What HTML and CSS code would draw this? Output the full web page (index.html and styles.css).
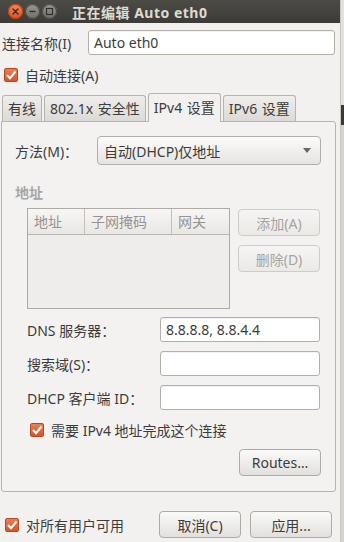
FILE: index.html
```html
<!DOCTYPE html>
<html>
<head>
    <meta charset="UTF-8">
    <meta name="viewport" content="width=device-width, initial-scale=1.0">
    <title>正在编辑 Auto eth0</title>
    <link rel="stylesheet" href="styles.css">
</head>
<body>
    <div class="screen">
        <div class="window">
            <div class="titlebar">
                <div class="wm-buttons">
                    <span class="wm close">
                        <svg width="15" height="15" viewBox="0 0 15 15"><path d="M5 5 L10 10 M10 5 L5 10" stroke="#3a2a22" stroke-width="1.4" stroke-linecap="round"/></svg>
                    </span>
                    <span class="wm">
                        <svg width="15" height="15" viewBox="0 0 15 15"><path d="M4.5 7.5 H10.5" stroke="#33322e" stroke-width="1.5"/></svg>
                    </span>
                    <span class="wm">
                        <svg width="15" height="15" viewBox="0 0 15 15"><rect x="4.5" y="4.5" width="6" height="6" fill="none" stroke="#33322e" stroke-width="1.2"/></svg>
                    </span>
                </div>
                <div class="title">正在编辑 Auto eth0</div>
            </div>

            <div class="content">
                <div class="name-row">
                    <span class="label">连接名称(I)</span>
                    <div class="entry name-entry">Auto eth0</div>
                </div>

                <div class="check-row top-check">
                    <span class="check"><svg width="14" height="14" viewBox="0 0 14 14"><path d="M3 7 L6 10.2 L11.5 3.5" fill="none" stroke="#fff" stroke-width="2"/></svg></span>
                    <span>自动连接(A)</span>
                </div>

                <div class="tabs">
                    <div class="tab">有线</div>
                    <div class="tab">802.1x 安全性</div>
                    <div class="tab active">IPv4 设置</div>
                    <div class="tab">IPv6 设置</div>
                </div>

                <div class="panel">
                    <div class="method-row">
                        <span class="label">方法(M)：</span>
                        <div class="combo">
                            <span>自动(DHCP)仅地址</span>
                            <span class="arrow"></span>
                        </div>
                    </div>

                    <div class="section-title">地址</div>

                    <div class="address">
                        <div class="table">
                            <div class="thead">
                                <div class="th col1">地址</div>
                                <div class="th col2">子网掩码</div>
                                <div class="th col3">网关</div>
                            </div>
                            <div class="tbody"></div>
                        </div>
                        <div class="side-buttons">
                            <button class="btn" disabled>添加(A)</button>
                            <button class="btn" disabled>删除(D)</button>
                        </div>
                    </div>

                    <div class="form">
                        <div class="form-row">
                            <span class="label">DNS 服务器：</span>
                            <div class="entry">8.8.8.8, 8.8.4.4</div>
                        </div>
                        <div class="form-row">
                            <span class="label">搜索域(S)：</span>
                            <div class="entry"></div>
                        </div>
                        <div class="form-row">
                            <span class="label">DHCP 客户端 ID：</span>
                            <div class="entry"></div>
                        </div>
                    </div>

                    <div class="check-row ipv4-check">
                        <span class="check"><svg width="14" height="14" viewBox="0 0 14 14"><path d="M3 7 L6 10.2 L11.5 3.5" fill="none" stroke="#fff" stroke-width="2"/></svg></span>
                        <span>需要 IPv4 地址完成这个连接</span>
                    </div>

                    <div class="routes-row">
                        <button class="btn">Routes…</button>
                    </div>
                </div>

                <div class="footer">
                    <div class="check-row">
                        <span class="check"><svg width="14" height="14" viewBox="0 0 14 14"><path d="M3 7 L6 10.2 L11.5 3.5" fill="none" stroke="#fff" stroke-width="2"/></svg></span>
                        <span>对所有用户可用</span>
                    </div>
                    <div class="footer-buttons">
                        <button class="btn">取消(C)</button>
                        <button class="btn">应用...</button>
                    </div>
                </div>
            </div>
        </div>
        <div class="edge">
            <div class="edge-top"></div>
            <div class="edge-dark"></div>
            <div class="edge-rest"></div>
        </div>
    </div>
</body>
</html>
```

FILE: styles.css
```css
body {
    margin: 0;
    font-family: "Noto Sans", "Noto Sans CJK SC", sans-serif;
    font-size: 14px;
    color: #3c3c3c;
    background: #f2f1f0;
}
.screen {
    display: flex;
    width: 344px;
    height: 542px;
    overflow: hidden;
}
.window {
    width: 341px;
    height: 542px;
    background: #f2f1f0;
    display: flex;
    flex-direction: column;
}
.edge {
    width: 3px;
    display: flex;
    flex-direction: column;
    border-left: 1px solid #c9c6c1;
}
.edge-top {
    height: 105px;
    background: #e4e2df;
}
.edge-dark {
    height: 20px;
    background: #3a3935;
}
.edge-rest {
    flex: 1;
    background: #d6d4d0;
}

/* title bar */
.titlebar {
    height: 23px;
    background: linear-gradient(#4c4b46, #3c3b37);
    display: flex;
    align-items: center;
}
.wm-buttons {
    display: flex;
    gap: 2px;
    margin-left: 8px;
}
.wm {
    width: 15px;
    height: 15px;
    border-radius: 50%;
    background: linear-gradient(#9a9893, #6f6d68);
    box-shadow: inset 0 0 0 1px #4a4944;
    display: flex;
}
.wm.close {
    background: linear-gradient(#f6895c, #df5220);
    box-shadow: inset 0 0 0 1px #b24317;
}
.title {
    margin-left: 15px;
    color: #dfdbd2;
    font-weight: bold;
    font-size: 14px;
    letter-spacing: 0.5px;
}

.content {
    padding: 0 1px;
}
.label {
    white-space: nowrap;
}

/* entries */
.entry {
    height: 25px;
    box-sizing: border-box;
    background: #fff;
    border: 1px solid #b3b0aa;
    border-radius: 3px;
    box-shadow: inset 0 1px 1px rgba(0, 0, 0, 0.06);
    padding: 0 5px;
    line-height: 23px;
}
.name-row {
    display: flex;
    align-items: center;
    margin-top: 7px;
}
.name-row .label {
    margin-left: 1px;
    width: 86px;
}
.name-entry {
    width: 247px;
}

/* checkbox */
.check-row {
    display: flex;
    align-items: center;
    gap: 7px;
    height: 20px;
}
.check {
    width: 14px;
    height: 14px;
    box-sizing: border-box;
    border-radius: 2px;
    background: linear-gradient(#ec7d53, #d5562b);
    border: 1px solid #b24a25;
    display: flex;
    align-items: center;
    justify-content: center;
}
.check svg {
    margin: -1px;
}
.top-check {
    margin-top: 10px;
    padding-left: 3px;
}

/* tabs */
.tabs {
    display: flex;
    align-items: flex-end;
    gap: 2px;
    margin-top: 8px;
    height: 28px;
    padding-left: 1px;
    position: relative;
    z-index: 1;
}
.tab {
    height: 26px;
    box-sizing: border-box;
    padding: 0 5px;
    border: 1px solid #b7b4ae;
    border-bottom: none;
    border-radius: 3px 3px 0 0;
    background: linear-gradient(#efeeec, #dcdad6);
    line-height: 25px;
    word-spacing: 1px;
}
.tab.active {
    height: 29px;
    margin-bottom: -1px;
    background: #f2f1f0;
    line-height: 27px;
}

/* panel */
.panel {
    width: 335px;
    height: 371px;
    box-sizing: border-box;
    border: 1px solid #b7b4ae;
    border-radius: 0 3px 3px 3px;
    background: #f3f2f1;
}
.method-row {
    display: flex;
    align-items: center;
    margin-top: 14px;
    padding-left: 13px;
}
.method-row .label {
    width: 82px;
}
.combo {
    width: 224px;
    height: 29px;
    box-sizing: border-box;
    border: 1px solid #b2afa9;
    border-radius: 4px;
    background: linear-gradient(#fbfbfa, #e6e4e1);
    display: flex;
    align-items: center;
    justify-content: space-between;
    padding: 0 9px 0 6px;
}
.arrow {
    width: 0;
    height: 0;
    border-left: 4px solid transparent;
    border-right: 4px solid transparent;
    border-top: 5px solid #6b6966;
}
.section-title {
    margin-top: 20px;
    padding-left: 13px;
    height: 16px;
    line-height: 16px;
    font-weight: bold;
    color: #a8a6a2;
}

/* address table */
.address {
    display: flex;
    gap: 8px;
    margin-top: 7px;
    padding-left: 25px;
}
.table {
    width: 203px;
    height: 101px;
    box-sizing: border-box;
    border: 1px solid #aeaba5;
    display: flex;
    flex-direction: column;
}
.thead {
    display: flex;
    height: 25px;
    border-bottom: 1px solid #b9b6b0;
    background: linear-gradient(#f7f6f5, #e9e7e4);
}
.th {
    box-sizing: border-box;
    padding-left: 6px;
    line-height: 25px;
    color: #959390;
    border-right: 1px solid #c3c0bb;
}
.col1 { width: 57px; }
.col2 { width: 87px; }
.col3 { flex: 1; border-right: none; }
.tbody {
    flex: 1;
    background: #eeedeb;
}
.side-buttons {
    display: flex;
    flex-direction: column;
    gap: 9px;
    padding-top: 1px;
}

/* buttons */
.btn {
    width: 82px;
    height: 27px;
    font-family: inherit;
    font-size: 14px;
    color: #3c3c3c;
    border: 1px solid #aeaba5;
    border-radius: 4px;
    background: linear-gradient(#fafaf9, #e2e0dc);
    padding: 0;
}
.btn:disabled {
    color: #a6a4a0;
    border-color: #cfccc7;
    background: linear-gradient(#f6f5f4, #ebe9e6);
}

/* form */
.form {
    display: flex;
    flex-direction: column;
    gap: 9px;
    margin-top: 8px;
    padding-left: 25px;
}
.form-row {
    display: flex;
    align-items: center;
}
.form-row .label {
    width: 133px;
}
.form-row .entry {
    width: 160px;
}
.ipv4-check {
    margin-top: 10px;
    padding-left: 28px;
}
.routes-row {
    display: flex;
    justify-content: flex-end;
    margin-top: 9px;
    padding-right: 14px;
}

/* footer */
.footer {
    display: flex;
    justify-content: space-between;
    align-items: center;
    margin-top: 19px;
    padding-left: 4px;
    padding-right: 7px;
}
.footer-buttons {
    display: flex;
    gap: 9px;
}
```
